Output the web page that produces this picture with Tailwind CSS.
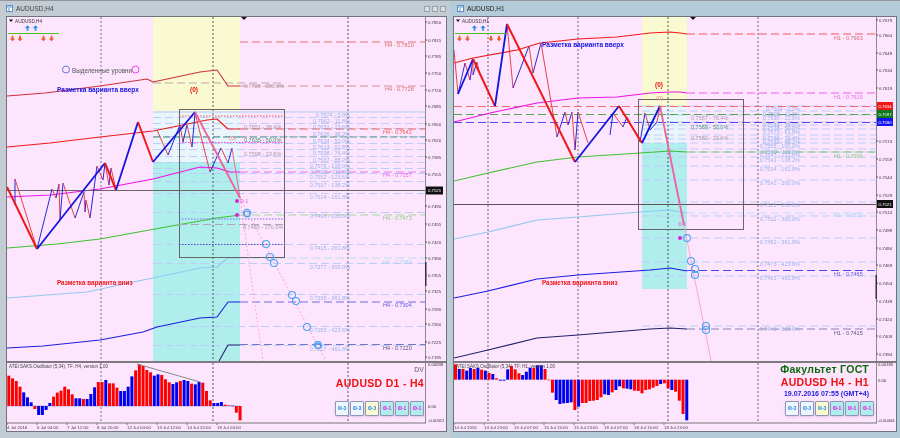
<!DOCTYPE html>
<html lang="ru">
  <head>
    <meta charset="UTF-8" />
    <title>AUDUSD H4 / H1</title>
    <script src="https://cdn.jsdelivr.net/npm/@tailwindcss/browser@4"></script>
  </head>
  <body class="bg-[#aab4bc] font-['Liberation_Sans',sans-serif] overflow-hidden">
    <main class="flex w-[900px] h-[438px] blur-[0.3px]">
      <!-- left window -->
      <section class="w-[450px] h-full bg-[#c3ccd3] border-t border-[#8f979d] flex flex-col pl-[6px] pr-[3px] pb-[6px]">
        <div class="h-[15px] shrink-0 flex items-center gap-[2px] text-[6.5px] text-[#444]">
          <svg width="7" height="7" viewBox="0 0 7 7"><rect x="0.5" y="0.5" width="6" height="6" fill="#fff" stroke="#5b8fc4"/><path d="M0 2h7M3 3v3" stroke="#5b8fc4"/></svg>
          <span class="ml-[1px]">AUDUSD,H4</span>
          <div class="ml-auto flex gap-[2px] pr-[1px]">
            <span class="w-[6px] h-[6px] border border-[#9aa3aa] bg-[#d8dde1]"></span>
            <span class="w-[6px] h-[6px] border border-[#9aa3aa] bg-[#d8dde1]"></span>
            <span class="w-[6px] h-[6px] border border-[#9aa3aa] bg-[#d8dde1]"></span>
          </div>
        </div>
        <div class="flex-1 flex flex-col bg-[#fde6fd] border border-[#6e7479]">
          <svg id="plot-h4" width="439" height="344" viewBox="7 17 439 344" class="shrink-0"></svg>
          <div class="relative h-[70px] border-t-2 border-[#7f7a80]">
            <svg id="osc-h4" width="439" height="68" viewBox="7 363 439 68"></svg>
            <div class="absolute inset-y-0 right-[22px] flex flex-col items-end">
              <span class="mt-[2px] text-[7px] font-bold text-[#8a8a8a] leading-[9px]">DV</span>
              <span class="mt-[3px] text-[10.5px] tracking-[0.3px] font-bold text-[#f01010] leading-[12px]">AUDUSD D1 - H4</span>
              <div class="flex gap-[1px] mt-[12px]">
                <span class="w-[14px] h-[15px] flex items-center justify-center text-[5px] font-bold text-[#2a8ae8] bg-[#eef6ff] border border-[#8f96b8] rounded-[1px] shadow-sm">Ф-3</span>
                <span class="w-[14px] h-[15px] flex items-center justify-center text-[5px] font-bold text-[#2a8ae8] bg-[#eef6ff] border border-[#8f96b8] rounded-[1px] shadow-sm">Ф-3</span>
                <span class="w-[14px] h-[15px] flex items-center justify-center text-[5px] font-bold text-[#2a8ae8] bg-[#fafad2] border border-[#8f96b8] rounded-[1px] shadow-sm">Ф-3</span>
                <span class="w-[14px] h-[15px] flex items-center justify-center text-[5px] font-bold text-[#f010e0] bg-[#aeeeee] border border-[#8f96b8] rounded-[1px] shadow-sm">Ф-1</span>
                <span class="w-[14px] h-[15px] flex items-center justify-center text-[5px] font-bold text-[#f010e0] bg-[#aeeeee] border border-[#8f96b8] rounded-[1px] shadow-sm">Ф-1</span>
                <span class="w-[14px] h-[15px] flex items-center justify-center text-[5px] font-bold text-[#f010e0] bg-[#aeeeee] border border-[#8f96b8] rounded-[1px] shadow-sm">Ф-1</span>
              </div>
            </div>
          </div>
        </div>
      </section>

      <!-- right window -->
      <section class="flex-1 h-full bg-[#b4ccda] border-t border-[#8f979d] flex flex-col pl-[3px] pr-[3px] pb-[6px]">
        <div class="h-[15px] shrink-0 flex items-center gap-[2px] text-[6.5px] text-[#222] pl-[4px]">
          <svg width="7" height="7" viewBox="0 0 7 7"><rect x="0.5" y="0.5" width="6" height="6" fill="#fff" stroke="#5b8fc4"/><path d="M0 2h7M3 3v3" stroke="#5b8fc4"/></svg>
          <span class="ml-[1px]">AUDUSD,H1</span>
        </div>
        <div class="flex-1 flex flex-col bg-[#fde6fd] border border-[#6e7479]">
          <svg id="plot-h1" width="442" height="344" viewBox="454 17 442 344" class="shrink-0"></svg>
          <div class="relative h-[70px] border-t-2 border-[#7f7a80]">
            <svg id="osc-h1" width="442" height="68" viewBox="454 363 442 68"></svg>
            <div class="absolute inset-y-0 right-[22px] flex flex-col items-end">
              <span class="mt-[0px] mr-[5px] text-[10.5px] tracking-[0.3px] font-bold text-[#0a6a0a] leading-[12px]">Факультет ГОСТ</span>
              <span class="mt-[1px] mr-[5px] text-[10.5px] tracking-[0.3px] font-bold text-[#f01010] leading-[12px]">AUDUSD H4 - H1</span>
              <span class="mt-[1px] mr-[5px] text-[7px] font-bold text-[#1a1ae0] leading-[9px]">19.07.2016 07:55 (GMT+4)</span>
              <div class="flex gap-[1px] mt-[3px]">
                <span class="w-[14px] h-[15px] flex items-center justify-center text-[5px] font-bold text-[#2a8ae8] bg-[#eef6ff] border border-[#8f96b8] rounded-[1px] shadow-sm">Ф-3</span>
                <span class="w-[14px] h-[15px] flex items-center justify-center text-[5px] font-bold text-[#2a8ae8] bg-[#eef6ff] border border-[#8f96b8] rounded-[1px] shadow-sm">Ф-3</span>
                <span class="w-[14px] h-[15px] flex items-center justify-center text-[5px] font-bold text-[#2a8ae8] bg-[#fafad2] border border-[#8f96b8] rounded-[1px] shadow-sm">Ф-3</span>
                <span class="w-[14px] h-[15px] flex items-center justify-center text-[5px] font-bold text-[#f010e0] bg-[#aeeeee] border border-[#8f96b8] rounded-[1px] shadow-sm">Ф-1</span>
                <span class="w-[14px] h-[15px] flex items-center justify-center text-[5px] font-bold text-[#f010e0] bg-[#aeeeee] border border-[#8f96b8] rounded-[1px] shadow-sm">Ф-1</span>
                <span class="w-[14px] h-[15px] flex items-center justify-center text-[5px] font-bold text-[#f010e0] bg-[#aeeeee] border border-[#8f96b8] rounded-[1px] shadow-sm">Ф-1</span>
              </div>
            </div>
          </div>
        </div>
      </section>
    </main>

    <script>
      const NS = "http://www.w3.org/2000/svg";
      const RED = "#f01818", BLUE = "#1414e0", THIN_RED = "#e8404a", THIN_BLUE = "#2626dc";
      const PINK = "#f0609a", RING = "#4aa3f0", FIB = "#bccdf7", FIB_TEXT = "#98b2ea";

      function add(svg, tag, attrs, text) {
        const el = document.createElementNS(NS, tag);
        for (const k in attrs) el.setAttribute(k, attrs[k]);
        if (text) el.textContent = text;
        svg.appendChild(el);
        return el;
      }
      function line(svg, pts, color, w, dash) {
        add(svg, "polyline", { points: pts.join(" "), fill: "none", stroke: color, "stroke-width": w || 1, "stroke-dasharray": dash || "none", "stroke-linejoin": "round" });
      }
      function rect(svg, x, y, w, h, fill) {
        add(svg, "rect", { x, y, width: w, height: h, fill });
      }
      function label(svg, x, y, str, color, size, bold) {
        add(svg, "text", { x, y, fill: color, "font-size": size || 5.5, "font-weight": bold ? "bold" : "normal" }, str);
      }
      function ring(svg, x, y, r, w) {
        add(svg, "circle", { cx: x, cy: y, r: r || 3.5, fill: "none", stroke: RING, "stroke-width": w || 1.1 });
      }
      function dot(svg, x, y) {
        add(svg, "circle", { cx: x, cy: y, r: 2, fill: "#e020d8" });
      }
      function arrow(svg, x, y, color, dir) {
        const d = dir * 2.8;
        add(svg, "path", { d: `M${x} ${y - d}L${x + 2.6} ${y}H${x + 0.9}V${y + d}H${x - 0.9}V${y}H${x - 2.6}Z`, fill: color });
      }
      function zig(svg, pts, w, odd, even) {
        for (let i = 0; i + 3 < pts.length; i += 2) {
          line(svg, pts.slice(i, i + 4), i % 4 === 0 ? odd : even, w);
        }
      }
      function bars(svg, data, x0, base) {
        data.split(" ").forEach((b, i) => {
          const z = parseInt(b), y = 340 + z / 3, y0 = 340 + base / 3;
          rect(svg, x0 + i * 3.73, Math.min(y, y0), 3, Math.max(Math.abs(y - y0), 0.6), b.endsWith("r") ? "#ff0000" : "#0000f0");
        });
      }
      function legend(svg, x, name, upArrows, downArrows, width) {
        add(svg, "path", { d: `M${x} 19.5h4l-2 2.5z`, fill: "#111" });
        label(svg, x + 6, 22.5, name, "#333", 4.7);
        upArrows.forEach((a) => arrow(svg, a, 28, "#2a8ff0", 1));
        line(svg, [x - 1, 33.5, x + width, 33.5], "#49c41e", 1);
        downArrows.forEach((a) => arrow(svg, a, 38.5, "#f0551e", -1));
      }

      // ---- H4 plot
      const p4 = document.getElementById("plot-h4");
      rect(p4, 153, 17, 87, 94, "#fafad2");
      rect(p4, 153, 111, 87, 51, "#eaf5fb");
      rect(p4, 153, 162, 87, 199, "#b0eeee");

      [121, 127, 132, 140, 147, 153, 160, 166, 172, 177, 185, 197, 216, 248, 267, 298, 330, 349].forEach((y) => {
        line(p4, [153, y - 3.5, 425, y - 3.5], FIB, 1, "8 4");
      });
      line(p4, [153, 112, 425, 112], "#c8d4f2", 1.4);
      line(p4, [240, 137, 425, 137], "#5a9a88", 1, "7 3");
      line(p4, [153, 137, 240, 137], "#3f8a70", 1, "7 3");

      line(p4, [101, 17, 101, 361], "#a8a0ae", 1.6, "2 2");
      line(p4, [213, 17, 213, 361], "#333", 0.8, "2 2");
      line(p4, [348, 17, 348, 361], "#333", 0.8, "2 2");
      add(p4, "path", { d: "M241 17h6l-3 3z", fill: "#111" });

      line(p4, [240, 42, 425, 42], "#e07070", 1, "8 4");
      line(p4, [240, 86, 425, 86], "#d89090", 1, "8 4");
      line(p4, [153, 83, 283, 83], "#bda8b0", 1, "8 4");
      label(p4, 385, 47, "H4 - 0.7810", "#d86a6a");
      label(p4, 385, 91, "H4 - 0.7728", "#d86a6a");

      // moving average bands
      line(p4, [7, 96, 45, 93, 100, 86, 147, 79, 153, 82, 200, 72, 217, 70, 228, 86, 240, 86], "#cc3040", 1.1);
      line(p4, [7, 147, 50, 143, 100, 137, 153, 131, 207, 120, 217, 119, 228, 129, 240, 129], "#f01818", 1.1);
      line(p4, [240, 129, 425, 129], "#f06060", 1.1, "8 4");
      line(p4, [7, 197, 50, 195, 100, 189, 137, 182, 153, 179, 200, 167, 217, 168, 230, 172, 240, 172], "#f010e8", 1.1);
      line(p4, [240, 172, 425, 172], "#f070f0", 1.1, "8 4");
      line(p4, [7, 248, 57, 244, 100, 239, 133, 233, 177, 225, 217, 218, 240, 215], "#3ec030", 1.1);
      line(p4, [240, 215, 425, 215], "#a4d8a0", 1, "8 4");
      line(p4, [7, 298, 87, 292, 133, 282, 153, 278, 200, 268, 217, 267, 228, 258, 240, 258], "#90c8ec", 1.1);
      line(p4, [240, 258, 425, 258], "#b8def4", 1, "8 4");
      line(p4, [7, 348, 43, 346, 100, 340, 143, 332, 157, 327, 200, 318, 217, 317, 228, 302, 240, 302], "#1c1ce0", 1.1);
      line(p4, [240, 302, 425, 302], "#6a6ae6", 1.1, "8 4");
      line(p4, [219, 361, 228, 345, 240, 345], "#20206a", 1.1);
      line(p4, [240, 344.5, 425, 344.5], "#7a78c0", 1.1, "8 4");
      label(p4, 383, 134, "H4 - 0.7642", "#ef5a5a");
      label(p4, 383, 177, "H4 - 0.7557", "#ee68ee");
      label(p4, 383, 220, "H4 - 0.7473", "#88cc80");
      label(p4, 383, 264, "H4 - 0.7389", "#a8d8f0");
      label(p4, 383, 307, "H4 - 0.7304", "#5a58d8");
      label(p4, 383, 350, "H4 - 0.7220", "#55557a");

      // crosshair and fib box
      line(p4, [7, 190.5, 425, 190.5], "#6a6468", 1);
      add(p4, "rect", { x: 179.5, y: 109.5, width: 105, height: 148, fill: "none", stroke: "#666", "stroke-width": 1 });
      line(p4, [179, 116, 284, 116], "#ff5050", 1, "1.5 1.5");
      line(p4, [179, 142.5, 284, 142.5], "#f040e8", 1, "1.5 1.5");
      line(p4, [179, 219, 284, 219], "#6a70ee", 1, "1.5 1.5");
      line(p4, [179, 224.5, 284, 224.5], "#b0a8b0", 1, "8 4");
      line(p4, [179, 244.5, 284, 244.5], "#4a50c0", 1, "1.5 1.5");

      // zigzags: thin then thick
      zig(p4, [15, 205, 15, 179, 37, 249, 52, 189, 56, 198, 59, 184, 60, 220, 63, 183, 75, 218, 84, 192, 85, 212, 86, 200, 90, 218, 97, 166, 103, 180, 105, 163, 109, 185, 111, 168, 116, 190], 1, THIN_BLUE, THIN_RED);
      zig(p4, [157, 130, 168, 155, 180, 125, 183, 142, 187, 125, 192, 147, 195, 113, 210, 172, 221, 148, 228, 163, 232, 148], 1, THIN_RED, THIN_BLUE);
      line(p4, [7, 187, 37, 249], RED, 2);
      line(p4, [37, 249, 105, 163], BLUE, 1.8);
      line(p4, [105, 163, 116, 190], RED, 2);
      line(p4, [116, 190, 138, 122], BLUE, 1.8);
      line(p4, [138, 122, 153, 162], RED, 2);
      line(p4, [153, 162, 195, 112], BLUE, 1.8);
      line(p4, [195, 112, 240, 198], PINK, 1.8);
      line(p4, [232, 148, 240, 198], PINK, 1);
      line(p4, [240, 198, 327, 363], "#f8a0c8", 0.9, "2 2");
      line(p4, [240, 198, 263, 361], "#f8a0c8", 0.9, "2 2");

      ring(p4, 247, 213, 3.6, 1.2); ring(p4, 247, 214, 2.8);
      [[266, 244], [270, 257], [274, 263], [292, 295], [296, 301], [307, 327]].forEach((c) => ring(p4, c[0], c[1]));
      ring(p4, 318, 345, 3.4, 1.3); ring(p4, 318, 346, 2.6);
      dot(p4, 237, 201); dot(p4, 237, 215);
      label(p4, 240, 202.5, "Ф-1", "#ee60e0", 5);

      // fib labels
      [["0.7674 - 0.0%", 117], ["0.7662 - 11.8%", 123], ["0.7651 - 23.6%", 129], ["0.7636 - 38.2%", 136], ["0.7624 - 50.0%", 143], ["0.7613 - 61.8%", 149], ["0.7598 - 76.4%", 155], ["0.7587 - 88.2%", 162], ["0.7575 - 100.0%", 168], ["0.7563 - 111.8%", 174], ["0.7552 - 123.6%", 179], ["0.7537 - 138.2%", 187], ["0.7514 - 161.8%", 199], ["0.7498 - 200.0%", 218], ["0.7415 - 261.8%", 250], ["0.7377 - 300.0%", 269], ["0.7338 - 361.8%", 300], ["0.7255 - 423.6%", 332], ["0.7217 - 461.8%", 351]].forEach((f) => {
        add(p4, "text", { x: 350, y: f[1], fill: FIB_TEXT, "font-size": 5.5, "text-anchor": "end" }, f[0]);
      });
      label(p4, 244, 88, "0.7729 - 200.0%", "#a59aa4");
      label(p4, 244, 129, "0.7651 - 38.4%", "#a59aa4");
      label(p4, 244, 142, "0.7635 - 50.0%", "#3d9a70");
      label(p4, 244, 156, "0.7598 - 23.6%", "#a59aa4");
      label(p4, 243, 229, "0.7455 - 270.0%", "#a59aa4");
      label(p4, 229, 140, "(0)", "#d88a8a", 6);
      label(p4, 190, 92, "(0)", "#f01010", 6.5, true);

      add(p4, "circle", { cx: 66, cy: 69.5, r: 3.5, fill: "none", stroke: "#6a78dc", "stroke-width": 1 });
      label(p4, 72, 73, "Выделенные уровни", "#555", 6.3);
      add(p4, "circle", { cx: 135.5, cy: 69.5, r: 3.5, fill: "none", stroke: "#f040e8", "stroke-width": 1 });
      label(p4, 57, 92, "Разметка варианта вверх", "#1414e0", 6.5, true);
      label(p4, 57, 284.5, "Разметка варианта вниз", "#f01818", 6.3, true);
      legend(p4, 9, "AUDUSD,H4", [27.5, 35.5], [12.5, 20, 43.5, 51.5], 50);

      // axis
      line(p4, [425.5, 17, 425.5, 361], "#8a8a90", 1);
      [[22, "0.7850"], [40, "0.7815"], [56, "0.7785"], [73, "0.7750"], [90, "0.7720"], [106, "0.7685"], [124, "0.7650"], [140, "0.7620"], [157, "0.7585"], [174, "0.7555"], [206, "0.7490"], [224, "0.7455"], [242, "0.7420"], [258, "0.7390"], [275, "0.7355"], [291, "0.7325"], [309, "0.7290"], [324, "0.7260"], [342, "0.7225"], [357, "0.7195"]].forEach((a) => {
        line(p4, [425, a[0], 427, a[0]], "#555", 1);
        label(p4, 428, a[0] + 1.6, a[1], "#333", 4.3);
      });
      rect(p4, 426, 186.5, 17, 8, "#111");
      label(p4, 428, 192.2, "0.7521", "#fff", 4.3);
      rect(p4, 425, 262, 1.5, 24, "#333");

      // ---- H4 oscillator
      const o4 = document.getElementById("osc-h4");
      line(o4, [7, 406, 240, 406], "#8888e8", 0.6);
      line(o4, [101, 363, 101, 423], "#a8a0ae", 1.6, "2 2");
      line(o4, [213, 363, 213, 423], "#333", 0.8, "2 2");
      line(o4, [348, 363, 348, 423], "#333", 0.8, "2 2");
      bars(o4, "107r 115r 123r 140r 157b 172b 187b 207r 225b 225b 210b 189b 170r 158r 152r 140r 148r 163r 175b 175b 177r 177b 162b 142b 126r 126r 120b 130r 130r 143r 153b 153b 140b 109b 91r 73r 78r 90r 97r 107b 103b 105r 118r 127r 132b 127b 123r 120b 123b 131r 133b 126b 128r 153r 181r 189b 189b 186b 194r 196r 197b 218r 241r", 7.3, 198);
      line(o4, [137, 364, 200, 382], "#888", 1);
      label(o4, 9, 367.5, "ATEI.SAKS.Oscillator (5,34), TF: H4,  version 1.00", "#444", 4.5);
      line(o4, [425.5, 363, 425.5, 423], "#8a8a90", 1);
      line(o4, [7, 423, 426, 423], "#777", 1);
      [[366, "0.00838"], [408, "0.00"], [422, "-0.00311"]].forEach((a) => label(o4, 428, a[0], a[1], "#333", 4.2));
      [[7, "4 Jul 2016"], [37, "6 Jul 04:00"], [67, "7 Jul 12:00"], [97, "8 Jul 20:00"], [127, "12 Jul 04:00"], [157, "13 Jul 12:00"], [187, "14 Jul 20:00"], [217, "18 Jul 04:00"]].forEach((a) => {
        line(o4, [a[0], 423, a[0], 425], "#777", 1);
        label(o4, a[0], 428.5, a[1], "#444", 4.4);
      });

      // ---- H1 plot
      const p1 = document.getElementById("plot-h1");
      rect(p1, 642, 17, 45, 90, "#fafad2");
      rect(p1, 642, 107, 45, 36, "#eaf5fb");
      rect(p1, 642, 143, 45, 146, "#b0eeee");

      [109, 114, 118, 125, 128, 132, 138, 142, 146, 152, 155, 160, 169, 183, 205, 219, 241, 265, 279, 329].forEach((y) => {
        line(p1, [642, y - 3, 876, y - 3], FIB, 1, "8 4");
      });
      line(p1, [488, 17, 488, 361], "#444", 0.8, "2 2");
      line(p1, [578, 17, 578, 361], "#444", 0.8, "2 2");
      line(p1, [668, 17, 668, 361], "#333", 0.8, "2 2");
      line(p1, [758, 17, 758, 361], "#444", 0.8, "2 2");
      add(p1, "path", { d: "M690 17h6l-3 3z", fill: "#111" });

      line(p1, [454, 106.5, 876, 106.5], "#f06a6a", 1, "8 4");
      line(p1, [454, 114.5, 876, 114.5], "#4ea850", 1, "8 4");
      line(p1, [454, 122.5, 876, 122.5], "#4a4af0", 1, "8 4");
      line(p1, [687, 34, 876, 34], "#f05a5a", 1.1, "8 4");
      line(p1, [687, 93, 876, 93], "#f060f0", 1.1, "8 4");
      line(p1, [687, 152, 876, 152], "#70cc68", 1.1, "8 4");
      line(p1, [687, 213, 876, 213], "#c0e2f4", 1, "8 4");
      line(p1, [687, 270.5, 876, 270.5], "#4848ee", 1.1, "8 4");
      line(p1, [687, 329, 876, 329], "#8880b8", 1.1, "8 4");
      line(p1, [454, 63, 473, 58, 517, 50, 540, 43, 578, 39, 617, 37, 650, 33, 670, 32, 680, 33, 687, 34], "#f01818", 1.1);
      line(p1, [454, 122, 490, 113, 537, 103, 578, 98, 617, 97, 650, 93, 670, 92, 680, 92, 687, 93], "#f010e8", 1.1);
      line(p1, [454, 181, 488, 173, 537, 162, 578, 157, 640, 153, 670, 151, 687, 152], "#3ec030", 1.1);
      line(p1, [454, 239, 488, 232, 537, 220, 578, 217, 640, 212, 670, 210, 687, 213], "#90c8ec", 1.1);
      line(p1, [454, 298, 488, 291, 537, 279, 578, 275, 650, 270, 670, 268, 687, 271], "#1c1ce0", 1.1);
      line(p1, [454, 358, 488, 350, 537, 338, 578, 335, 650, 329, 670, 328, 687, 329], "#20206a", 1.1);
      label(p1, 834, 39.5, "H1 - 0.7663", "#d86a6a");
      label(p1, 834, 98.5, "H1 - 0.7615", "#ee68ee");
      label(p1, 834, 157.5, "H1 - 0.7565", "#88cc80");
      label(p1, 834, 216.5, "H1 - 0.7515", "#a8d8f0");
      label(p1, 834, 276, "H1 - 0.7465", "#5a58d8");
      label(p1, 834, 335, "H1 - 0.7415", "#55557a");

      line(p1, [454, 204.5, 876, 204.5], "#5a5458", 1);
      add(p1, "rect", { x: 638.5, y: 99.5, width: 105, height: 130, fill: "none", stroke: "#666", "stroke-width": 1 });

      zig(p1, [454, 50, 458, 94, 465, 63, 470, 80, 473, 59, 473, 75, 477, 62, 480, 75], 1, THIN_RED, THIN_BLUE);
      zig(p1, [507, 24, 513, 88, 529, 46, 533, 73, 541, 43, 557, 137, 565, 112, 568, 125, 572, 112, 575, 150, 578, 112, 588, 143], 1, THIN_RED, THIN_BLUE);
      zig(p1, [610, 135, 613, 113, 623, 127, 627, 117, 640, 142, 645, 113, 650, 130, 657, 122, 660, 106], 1, THIN_BLUE, THIN_RED);
      line(p1, [458, 94, 473, 59], BLUE, 1.8);
      line(p1, [473, 59, 495, 106], RED, 2);
      line(p1, [495, 106, 507, 24], BLUE, 1.8);
      line(p1, [507, 24, 575, 162], RED, 2);
      line(p1, [575, 162, 619, 106], BLUE, 1.8);
      line(p1, [619, 106, 642, 143], RED, 2);
      line(p1, [642, 143, 660, 106], BLUE, 1.8);
      line(p1, [660, 106, 684, 225], PINK, 1.8);
      line(p1, [684, 225, 711, 361], "#f8a8cc", 1);

      ring(p1, 687, 238, 3.4); ring(p1, 691, 261); ring(p1, 695, 269); ring(p1, 695, 275); ring(p1, 706, 326); ring(p1, 706, 330);
      dot(p1, 680, 238);
      label(p1, 678, 226, "Ф-1", "#ee60e0", 5);

      [["0.7604 - 0.0%", 111], ["0.7595 - 11.8%", 116], ["0.7590 - 23.6%", 120], ["0.7583 - 38.2%", 127], ["0.7578 - 50.0%", 130], ["0.7573 - 61.8%", 134], ["0.7566 - 76.4%", 140], ["0.7560 - 88.2%", 144], ["0.7555 - 100.0%", 148], ["0.7552 - 111.8%", 154], ["0.7547 - 123.6%", 157], ["0.7541 - 138.2%", 162], ["0.7534 - 161.8%", 171], ["0.7542 - 200.0%", 185], ["0.7521 - 261.8%", 207], ["0.7511 - 300.0%", 221], ["0.7492 - 361.8%", 244], ["0.7473 - 423.6%", 266], ["0.7461 - 461.8%", 280], ["0.7443 - 523.6%", 331]].forEach((f) => {
        add(p1, "text", { x: 800, y: f[1], fill: FIB_TEXT, "font-size": 5.5, "text-anchor": "end" }, f[0]);
      });
      label(p1, 691, 120, "0.7587 - 76.4%", "#a59aa4");
      label(p1, 691, 129, "0.7589 - 50.0%", "#3d9a70");
      label(p1, 691, 140, "0.7580 - 23.6%", "#a59aa4");
      label(p1, 655, 87, "(0)", "#f01010", 6.5, true);
      label(p1, 656, 100, "(0)", "#d88a8a", 6);
      label(p1, 542, 47, "Разметка варианта вверх", "#1414e0", 6.5, true);
      label(p1, 542, 285, "Разметка варианта вниз", "#f01818", 6.3, true);
      legend(p1, 456, "AUDUSD,H1", [474.5, 483], [459.5, 467.5, 491, 499], 50);

      line(p1, [876.5, 17, 876.5, 361], "#8a8a90", 1);
      [[20, "0.7679"], [35, "0.7664"], [53, "0.7649"], [70, "0.7634"], [88, "0.7619"], [141, "0.7574"], [159, "0.7559"], [177, "0.7544"], [195, "0.7529"], [212, "0.7514"], [230, "0.7499"], [248, "0.7484"], [265, "0.7469"], [283, "0.7454"], [301, "0.7439"], [319, "0.7424"], [336, "0.7409"], [354, "0.7394"]].forEach((a) => {
        line(p1, [876, a[0], 878, a[0]], "#555", 1);
        label(p1, 879, a[0] + 1.6, a[1], "#333", 4.3);
      });
      [[102, "#f01818", "0.7634", "#fff"], [110, "#0a7a1a", "0.7597", "#fff"], [118, "#1414f0", "0.7590", "#fff"], [200, "#111", "0.7521", "#fff"]].forEach((b) => {
        rect(p1, 877, b[0], 16, 8, b[1]);
        label(p1, 878.5, b[0] + 5.6, b[2], b[3], 4.3);
      });
      rect(p1, 875.5, 275, 1.5, 24, "#333");

      // ---- H1 oscillator
      const o1 = document.getElementById("osc-h1");
      line(o1, [488, 363, 488, 423], "#444", 0.8, "2 2");
      line(o1, [578, 363, 578, 423], "#444", 0.8, "2 2");
      line(o1, [668, 363, 668, 423], "#333", 0.8, "2 2");
      line(o1, [758, 363, 758, 423], "#444", 0.8, "2 2");
      bars(o1, "73r 87b 87r 92b 84b 87r 84b 89r 92b 99r 102b 115r 122b 122b 88b 78r 88r 100r 105b 95b 83b 84r 76b 76b 87r 119r 158r 180b 192b 190b 189b 187b 210r 200b 189r 189r 183r 182r 180r 172r 163b 165b 157r 150b 139b 145r 146b 148b 152r 153r 160r 150r 148r 143r 138r 132b 130r 145r 150b 155r 182r 222r 241b", 454, 119);
      label(o1, 456, 367.5, "ATEI.SAKS.Oscillator (5,34), TF: H1,  version 1.00", "#444", 4.5);
      line(o1, [876.5, 363, 876.5, 423], "#8a8a90", 1);
      line(o1, [454, 423, 877, 423], "#777", 1);
      [[366, "0.00185"], [382, "0.00"], [422, "-0.00444"]].forEach((a) => label(o1, 878, a[0], a[1], "#333", 4.2));
      [[454, "14 Jul 2016"], [484, "14 Jul 23:00"], [514, "15 Jul 07:00"], [544, "15 Jul 15:00"], [574, "15 Jul 23:00"], [604, "18 Jul 07:00"], [634, "18 Jul 15:00"], [664, "18 Jul 23:00"]].forEach((a) => {
        line(o1, [a[0], 423, a[0], 425], "#777", 1);
        label(o1, a[0], 428.5, a[1], "#444", 4.4);
      });
    </script>
  </body>
</html>
